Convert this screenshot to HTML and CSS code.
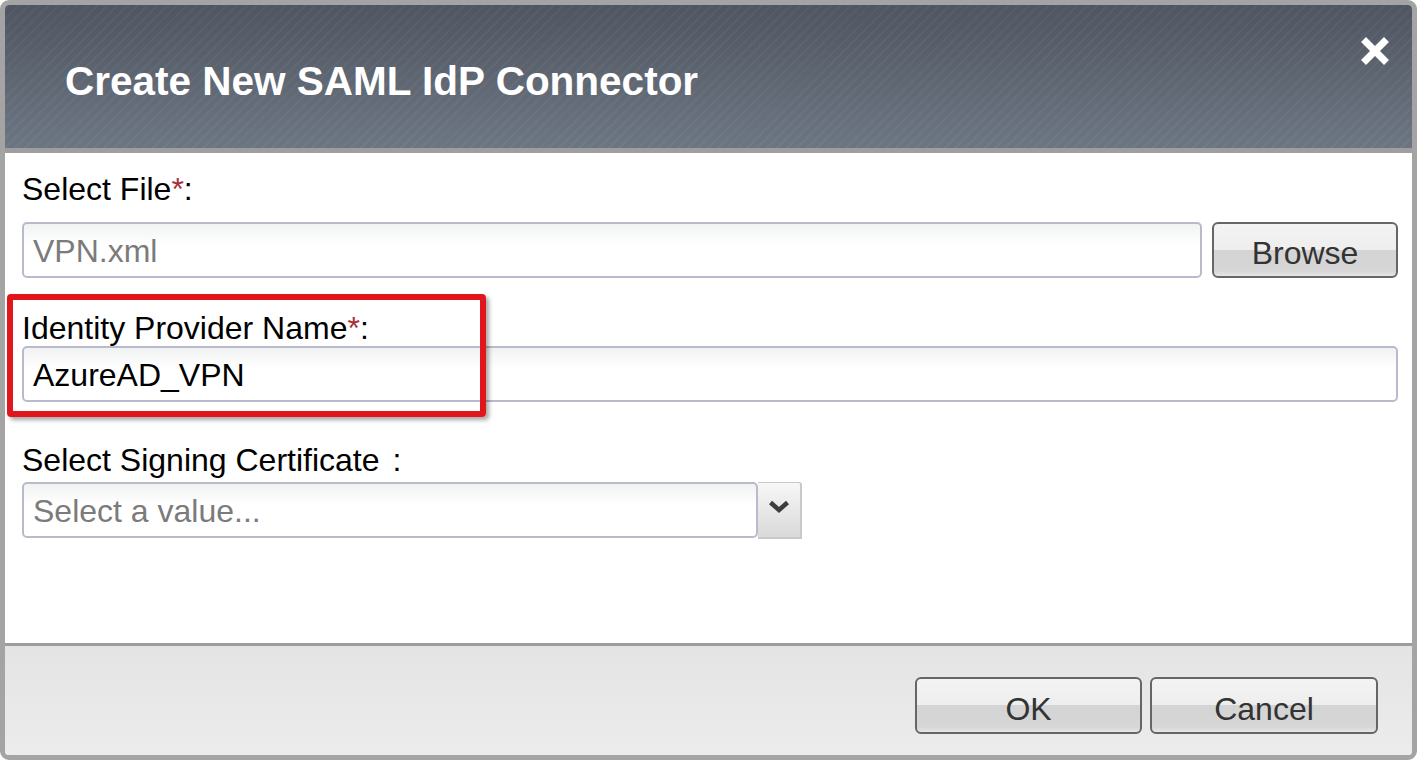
FILE: index.html
```html
<!DOCTYPE html>
<html>
<head>
<meta charset="utf-8">
<link rel="stylesheet" href="styles.css">
</head>
<body>
<div class="dialog">
  <div class="header">
    <h1 class="title">Create New SAML IdP Connector</h1>
    <span class="close">
      <svg width="28" height="28" viewBox="0 0 28 28"><path d="M5 5 L23 23 M23 5 L5 23" stroke="#fff" stroke-width="7" stroke-linecap="square"/></svg>
    </span>
  </div>
  <div class="body">
    <div class="label l1">Select File<span class="req">*</span>:</div>
    <div class="row">
      <div class="input file-input"><span class="muted">VPN.xml</span></div>
      <button class="btn browse">Browse</button>
    </div>
    <div class="label l2">Identity Provider Name<span class="req">*</span>:</div>
    <div class="input name-input">AzureAD_VPN</div>
    <div class="label l3">Select Signing Certificate <span class="colon">:</span></div>
    <div class="select-row">
      <div class="input select-input"><span class="muted">Select a value...</span></div>
      <div class="dd">
        <svg width="22" height="14" viewBox="0 0 22 14"><path d="M2.5 2.5 L11 10 L19.5 2.5" fill="none" stroke="#3d3d3d" stroke-width="4.5"/></svg>
      </div>
    </div>
    <div class="highlight"></div>
  </div>
  <div class="footer">
    <button class="btn ok">OK</button>
    <button class="btn cancel">Cancel</button>
  </div>
</div>
</body>
</html>
```
FILE: styles.css
```css
* { box-sizing: border-box; }
html, body { margin: 0; padding: 0; background: #fff; }
body { font-family: "Liberation Sans", Arial, sans-serif; width: 1419px; height: 762px; overflow: hidden; }

.dialog {
  width: 1417px;
  height: 760px;
  border: 5px solid #a4a4a4;
  border-radius: 9px;
  display: flex;
  flex-direction: column;
  overflow: hidden;
  background: #fff;
}

.header {
  height: 148px;
  flex: none;
  border-bottom: 5px solid #9e9e9e;
  background:
    repeating-linear-gradient(-45deg, rgba(255,255,255,0.035) 0 2px, rgba(0,0,0,0) 2px 7px),
    linear-gradient(#4f5561, #6c7682);
  display: flex;
  align-items: center;
  justify-content: space-between;
  padding-left: 60px;
  padding-right: 24px;
  position: relative;
}
.title {
  margin: 0;
  color: #fff;
  font-size: 40.5px;
  font-weight: bold;
  line-height: 48px;
  margin-top: 8px;
}
.close {
  align-self: flex-start;
  margin-top: 32px;
  margin-right: -1px;
  display: flex;
  filter: blur(0.5px);
}

.body {
  position: relative;
  height: 493px;
  flex: none;
  padding: 20px 14px 0 17px;
  border-bottom: 3px solid #9c9c9c;
}
.label {
  font-size: 32px;
  line-height: 32px;
  color: #000;
}
.req { color: #a6303a; }
.colon { margin-left: 4px; }
.l1 { margin-bottom: 17px; }
.l2 { margin-top: 34px; margin-bottom: 2px; }
.l3 { margin-top: 42px; margin-bottom: 6px; }

.row { display: flex; gap: 10px; }
.input {
  height: 56px;
  border: 2px solid #b9bbcc;
  border-radius: 5px;
  background: linear-gradient(#f1f2f2, #ffffff 40%);
  font-size: 32px;
  color: #000;
  display: flex;
  align-items: center;
  padding-left: 9px;
  padding-top: 2px;
}
.muted { color: #7b7b7b; }
.file-input { width: 1180px; }
.name-input { width: 1376px; }
.select-row { display: flex; }
.select-input { width: 736px; }
.dd {
  width: 44px;
  height: 57px;
  border: 1px solid #c9c9c9;
  border-left: none;
  border-right-width: 2px;
  border-bottom-width: 2px;
  border-radius: 0 3px 0 0;
  background: linear-gradient(#f7f7f7, #d9d9d9);
  display: flex;
  align-items: center;
  justify-content: center;
  padding-bottom: 6px;
}

.btn {
  font-family: "Liberation Sans", Arial, sans-serif;
  font-size: 32px;
  color: #333;
  border: 2px solid #666;
  border-radius: 6px;
  background: linear-gradient(#f3f3f3 0%, #eeeeee 50%, #d4d4d4 50%, #d6d6d6 90%, #e6e6e6 100%);
  height: 57px;
  padding: 8px 0 0 0;
  cursor: pointer;
}
.browse { width: 186px; height: 56px; padding-top: 6px; }

.highlight {
  position: absolute;
  left: 2px;
  top: 141px;
  width: 479px;
  height: 123px;
  border: 6px solid #e0161c;
  border-radius: 4px;
  box-shadow: 3px 3px 4px rgba(0,0,0,0.35);
}

.footer {
  flex: 1;
  background: linear-gradient(#e4e4e4, #ececec);
  display: flex;
  justify-content: flex-end;
  align-items: flex-start;
  gap: 8px;
  padding-top: 31px;
  padding-right: 34px;
}
.ok { width: 227px; }
.cancel { width: 228px; }
```
